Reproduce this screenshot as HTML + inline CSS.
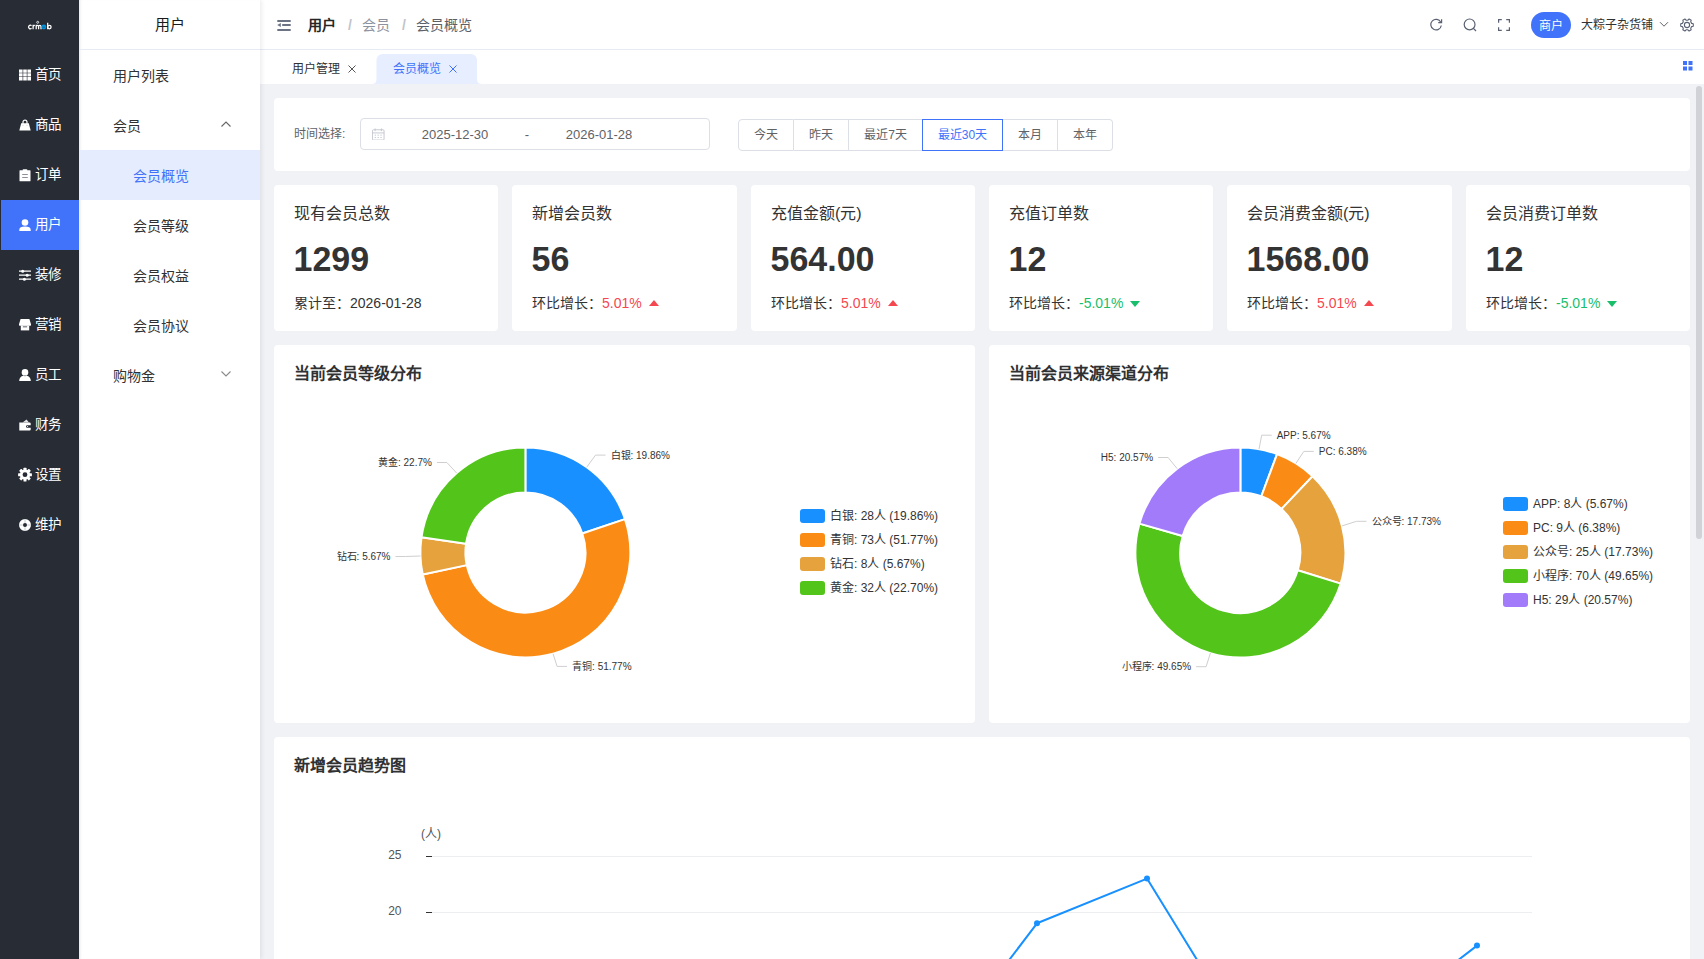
<!DOCTYPE html>
<html lang="zh-CN"><head><meta charset="utf-8"><title>会员概览</title>
<style>
*{box-sizing:border-box;margin:0;padding:0}
html,body{width:1704px;height:959px;overflow:hidden}
body{position:relative;white-space:nowrap;background:#f0f2f5;font-family:"Liberation Sans",sans-serif;color:#303133;font-size:14px}
.abs{position:absolute}
#side{position:absolute;left:0;top:0;width:79px;height:959px;background:#282c34}
.si{position:absolute;left:0;width:79px;height:50px;color:#fff;font-size:13.5px;line-height:50px;white-space:nowrap}
.si.act{background:#4073fa;left:1px;width:78px}
.si .ic{position:absolute;left:19px;top:19px;overflow:visible}
.si.act .ic{left:18px}
.si span{position:absolute;left:34.5px;top:0}
.si.act span{left:33.5px}
#sub{position:absolute;left:79px;top:0;width:181px;height:959px;background:#fff;box-shadow:2px 0 4px rgba(0,21,41,.07),inset 3px 0 3px -2px rgba(0,0,0,.10);z-index:2}
#sub .hd{height:50px;border-bottom:1px solid #e7ebf3;text-align:center;line-height:49px;font-size:15px;color:#1a1a1a}
.mi{position:absolute;left:0;width:181px;height:50px;line-height:53px;font-size:14px;color:#303133;padding-left:34px}
.mi.l2{padding-left:54px}
.mi.on{background:#e4ecfe;color:#4073fa}
.chev{position:absolute;right:28px;top:20px}
#hdr{position:absolute;left:260px;top:0;width:1444px;height:50px;background:#fff;border-bottom:1px solid #e7ebf3}
#tabs{position:absolute;left:260px;top:50px;width:1444px;height:34px;background:#fff}
.bc{position:absolute;top:0;line-height:50px;font-size:14px;white-space:nowrap}
.card{position:absolute;background:#fff;border-radius:4px}
.st{top:185px;height:146px}
.ct{position:absolute;left:20px;top:21px;font-size:16px;line-height:16px;color:#333;white-space:nowrap}
.cn{position:absolute;left:19.5px;top:55.5px;font-size:34px;line-height:36px;font-weight:bold;color:#333;transform:scaleY(1.055);transform-origin:0 29.8px}
.cb{position:absolute;left:20px;top:110px;font-size:14px;line-height:16px;color:#333;white-space:nowrap}
.red{color:#f5474f}.grn{color:#19be6b}
.tu{display:inline-block;width:0;height:0;border-left:5px solid transparent;border-right:5px solid transparent;border-bottom:6px solid #f5474f;margin-left:7px;vertical-align:2px}
.td{display:inline-block;width:0;height:0;border-left:5px solid transparent;border-right:5px solid transparent;border-top:6px solid #19be6b;margin-left:7px;vertical-align:1px}
.h3{position:absolute;left:20px;top:19px;font-size:16px;line-height:20px;font-weight:bold;color:#303133}
.pl{font-size:10px;fill:#333;font-family:"Liberation Sans",sans-serif}
.lg{font-size:12px;fill:#333;font-family:"Liberation Sans",sans-serif}
.ax{font-size:12px;fill:#555;font-family:"Liberation Sans",sans-serif}
.rb{position:absolute;top:0;height:32px;border:1px solid #dcdfe6;border-left:0;background:#fff;font-size:12px;line-height:30px;text-align:center;color:#606266}
</style></head><body>
<div id="side">
<svg class="abs" style="left:27px;top:18px" width="28" height="14" viewBox="0 0 28 14"><g fill="none" stroke="#fff" stroke-width="1.250"><path d="M4.5 7.7A1.750 1.750 0 1 0 4.5 10.3"/><path d="M6.1 6.8V11.3M6.1 8.7A1.7 1.7 0 0 1 7.9 7.3"/><path d="M9.2 6.8V11.3M9.2 8.5A1.2 1.2 0 0 1 11.6 8.5V11.3M11.6 8.5A1.2 1.2 0 0 1 14 8.5V11.3"/><path d="M20.7 4.8V11.3"/><circle cx="22.4" cy="9.1" r="1.7"/><circle cx="10.7" cy="4.3" r="1" stroke-width="0.8"/></g><circle cx="16.9" cy="9" r="2.4" fill="#0092dc"/><path d="M15.3 9.2h2.4" stroke="#282c34" stroke-width="0.5"/></svg>
<div class="si" style="top:50px"><svg class="ic" width="12" height="12" viewBox="0 0 12 12"><path d="M0 0.5h3.6v3.2H0zM4.2 0.5h3.6v3.2H4.2zM8.4 0.5H12v3.2H8.4zM0 4.3h3.6v3.2H0zM4.2 4.3h3.6v3.2H4.2zM8.4 4.3H12v3.2H8.4zM0 8.1h3.6v3.4H0zM4.2 8.1h3.6v3.4H4.2zM8.4 8.1H12v3.4H8.4z" fill="#fff"/></svg><span>首页</span></div>
<div class="si" style="top:100px"><svg class="ic" width="12" height="12" viewBox="0 0 12 12"><path d="M2.2 4.2h7.6l1.9 7.3H0.3z" fill="#fff"/><path d="M4 5V3.2a2 2 0 0 1 4 0V5" fill="none" stroke="#fff" stroke-width="1.2"/><circle cx="4" cy="6.2" r="0.55" fill="#c8cbd0"/><circle cx="8" cy="6.2" r="0.55" fill="#c8cbd0"/></svg><span>商品</span></div>
<div class="si" style="top:150px"><svg class="ic" width="12" height="12" viewBox="0 0 12 12"><path d="M1 1.3h10a0.5 0.5 0 0 1 .5.5v9.9a0.5 0.5 0 0 1-.5.5H1a0.5 0.5 0 0 1-.5-.5V1.8a0.5 0.5 0 0 1 .5-.5z" fill="#fff"/><rect x="3.6" y="0.2" width="4.8" height="1.8" rx="0.9" fill="#fff"/><rect x="3.2" y="5" width="5.6" height="1" fill="#8d9199"/><rect x="3.2" y="8" width="5.6" height="1" fill="#8d9199"/></svg><span>订单</span></div>
<div class="si act" style="top:200px"><svg class="ic" width="12" height="12" viewBox="0 0 12 12"><circle cx="6" cy="3.5" r="3.3" fill="#fff"/><path d="M0.3 12v-1.2c0-2 2-3.2 5.7-3.2s5.7 1.2 5.7 3.2V12z" fill="#fff"/></svg><span>用户</span></div>
<div class="si" style="top:250px"><svg class="ic" width="12" height="12" viewBox="0 0 12 12"><path d="M0 2.2h12M0 6.2h12M0 10.2h12" stroke="#fff" stroke-width="1.3"/><circle cx="3.7" cy="2.2" r="1.5" fill="#fff"/><circle cx="8.2" cy="6.2" r="1.5" fill="#fff"/><circle cx="5.4" cy="10.2" r="1.5" fill="#fff"/></svg><span>装修</span></div>
<div class="si" style="top:300px"><svg class="ic" width="12" height="12" viewBox="0 0 12 12"><path d="M1.6 0h8.8l1.6 5.2a1.2 1.2 0 0 1-1.1 1.6H1.1a1.2 1.2 0 0 1-1.1-1.6z" fill="#fff"/><path d="M1.8 6.5h8.4v4.9H1.8z" fill="#fff"/><rect x="3.8" y="7.4" width="4.4" height="0.9" rx="0.4" fill="#282c34"/></svg><span>营销</span></div>
<div class="si" style="top:350px"><svg class="ic" width="12" height="12" viewBox="0 0 12 12"><circle cx="6" cy="3.4" r="3.3" fill="#fff"/><path d="M0.2 12c0-3.2 2.3-5.4 5.8-5.4s5.8 2.2 5.8 5.4z" fill="#fff"/><path d="M5.2 6.6h1.6l-.8 1z" fill="#282c34"/></svg><span>员工</span></div>
<div class="si" style="top:400px"><svg class="ic" width="12" height="12" viewBox="0 0 12 12"><path d="M0.3 3.5h10.4a1 1 0 0 1 1 1v1.7H8.3a1.2 1.2 0 0 0 0 2.6h3.4v1.7a1 1 0 0 1-1 1H0.3z" fill="#fff"/><path d="M3.6 3.5L7.5 0.5l2.5 3z" fill="#e4e5e7"/><circle cx="8.6" cy="7.5" r="0.6" fill="#fff"/></svg><span>财务</span></div>
<div class="si" style="top:450px"><svg class="ic" width="12" height="12" viewBox="0 0 12 12"><g transform="translate(6 5.7)"><circle r="5.1" fill="#fff"/><g fill="#fff"><rect x="-1.5" y="-6.9" width="3" height="13.8" rx="0.5"/><rect x="-1.5" y="-6.9" width="3" height="13.8" rx="0.5" transform="rotate(45)"/><rect x="-1.5" y="-6.9" width="3" height="13.8" rx="0.5" transform="rotate(90)"/><rect x="-1.5" y="-6.9" width="3" height="13.8" rx="0.5" transform="rotate(135)"/></g><circle r="2.4" fill="#282c34"/></g></svg><span>设置</span></div>
<div class="si" style="top:500px"><svg class="ic" width="12" height="12" viewBox="0 0 12 12"><circle cx="6" cy="6" r="4" fill="none" stroke="#fff" stroke-width="4"/><path d="M6 0v3.8M6 8.2V12M0 6h3.8M8.2 6H12" stroke="#b9bbc0" stroke-width="0.8"/></svg><span>维护</span></div>

</div>
<div id="sub">
<div class="hd">用户</div>
<div class="mi" style="top:50px">用户列表</div>
<div class="mi" style="top:100px">会员<svg class="chev" width="12" height="8" viewBox="0 0 12 8"><path d="M1.5 6.5L6 2l4.5 4.5" fill="none" stroke="#666" stroke-width="1.1"/></svg></div>
<div class="mi l2 on" style="top:150px">会员概览</div>
<div class="mi l2" style="top:200px">会员等级</div>
<div class="mi l2" style="top:250px">会员权益</div>
<div class="mi l2" style="top:300px">会员协议</div>
<div class="mi" style="top:350px">购物金<svg class="chev" width="12" height="8" viewBox="0 0 12 8"><path d="M1.5 1.5L6 6l4.5-4.5" fill="none" stroke="#8a8a8a" stroke-width="1.1"/></svg></div>
</div>
<div id="hdr">
<svg class="abs" style="left:17px;top:19px" width="14" height="13" viewBox="0 0 14 13"><path d="M0.3 1h13.4v2H0.3zM5.2 5h8.5v2H5.2zM0.3 10h13.4v2H0.3z" fill="#6b7385"/><path d="M0.2 6L3.8 4v4z" fill="#6b7385"/></svg>
<div class="bc" style="left:48px;font-weight:bold;color:#262626">用户</div>
<div class="bc" style="left:88px;color:#c0c4cc;font-weight:bold">/</div>
<div class="bc" style="left:102px;color:#8d929e">会员</div>
<div class="bc" style="left:142px;color:#c0c4cc;font-weight:bold">/</div>
<div class="bc" style="left:156px;color:#5c6066">会员概览</div>
<svg class="abs" style="left:1169px;top:18px" width="14" height="14" viewBox="0 0 14 14"><path d="M11.8 4.2A5.3 5.3 0 1 0 12.3 7.5" fill="none" stroke="#5a6172" stroke-width="1.2"/><path d="M12.6 1.3v3.4H9.2" fill="none" stroke="#5a6172" stroke-width="1.2"/></svg>
<svg class="abs" style="left:1203px;top:18px" width="14" height="14" viewBox="0 0 14 14"><circle cx="6.6" cy="6.4" r="5.4" fill="none" stroke="#5a6172" stroke-width="1.2"/><path d="M10.4 10.3l2.6 2.7" stroke="#5a6172" stroke-width="1.2"/></svg>
<svg class="abs" style="left:1238px;top:19px" width="12" height="12" viewBox="0 0 12 12"><path d="M0.6 3.8V0.6h3.2M8.2 0.6h3.2v3.2M11.4 8.2v3.2H8.2M3.8 11.4H0.6V8.2" fill="none" stroke="#5a6172" stroke-width="1.2"/></svg>
<div class="abs" style="left:1271px;top:12px;width:40px;height:26px;border-radius:13px;background:#4073fa;color:#fff;font-size:12px;line-height:28px;text-align:center">商户</div>
<div class="abs" style="left:1321px;top:0;line-height:50px;font-size:12px;color:#303133;white-space:nowrap">大粽子杂货铺</div>
<svg class="abs" style="left:1399px;top:21px" width="10" height="7" viewBox="0 0 10 7"><path d="M1 1.2l4 4 4-4" fill="none" stroke="#606266" stroke-width="1"/></svg>
<svg class="abs" style="left:1420px;top:18px" width="14" height="14" viewBox="0 0 14 14"><path d="M11.63 5.40L13.28 5.78L13.28 8.22L11.63 8.60L10.70 10.21L11.20 11.83L9.08 13.05L7.93 11.81L6.07 11.81L4.92 13.05L2.80 11.83L3.30 10.21L2.37 8.60L0.72 8.22L0.72 5.78L2.37 5.40L3.30 3.79L2.80 2.17L4.92 0.95L6.07 2.19L7.93 2.19L9.08 0.95L11.20 2.17L10.70 3.79Z" fill="none" stroke="#5a6172" stroke-width="1.1" stroke-linejoin="round"/><circle cx="7" cy="7" r="2.6" fill="none" stroke="#5a6172" stroke-width="1.1"/></svg>
</div>
<div id="tabs">
<svg class="abs" style="left:112px;top:4px" width="110" height="30" viewBox="0 0 110 30"><path d="M0 30C4 30 4.5 27 4.5 24V6a6 6 0 0 1 6-6H99a6 6 0 0 1 6 6v18c0 3 .5 6 5 6z" fill="#e6eeff"/></svg>
<div class="abs" style="left:32px;top:0;line-height:39px;font-size:12px;color:#303133">用户管理</div>
<svg class="abs" style="left:88px;top:14.7px" width="8" height="8" viewBox="0 0 8 8"><path d="M0.5 0.5l7 7M7.5 0.5l-7 7" stroke="#555" stroke-width="1"/></svg>
<div class="abs" style="left:133px;top:0;line-height:39px;font-size:12px;color:#4073fa">会员概览</div>
<svg class="abs" style="left:189px;top:14.7px" width="8" height="8" viewBox="0 0 8 8"><path d="M0.5 0.5l7 7M7.5 0.5l-7 7" stroke="#4073fa" stroke-width="1"/></svg>
<svg class="abs" style="left:1423px;top:11px" width="10" height="10" viewBox="0 0 10 10"><path d="M0 0h4v4H0zM5.5 0h4v4h-4zM0 5.5h4v4H0zM5.5 5.5h4v4h-4z" fill="#4073fa"/></svg>
</div>

<div class="card" style="left:274px;top:98px;width:1416px;height:73px">
<div class="abs" style="left:20px;top:20px;line-height:32px;font-size:12px;color:#606266">时间选择:</div>
<div class="abs" style="left:86px;top:20px;width:350px;height:32px;border:1px solid #dcdfe6;border-radius:4px">
<svg class="abs" style="left:11px;top:8.5px" width="12.5" height="12.5" viewBox="0 0 14 14"><rect x="0.5" y="2" width="13" height="11.5" rx="1" fill="none" stroke="#c0c4cc"/><path d="M0.5 5.5h13M3.5 0.5v3M10.5 0.5v3" stroke="#c0c4cc"/><path d="M3 8h1.5M6.2 8h1.5M9.4 8h1.5M3 10.6h1.5M6.2 10.6h1.5M9.4 10.6h1.5" stroke="#c0c4cc"/></svg>
<div class="abs" style="left:34px;top:0;width:120px;text-align:center;line-height:32px;font-size:13px;color:#606266">2025-12-30</div>
<div class="abs" style="left:160px;top:0;width:12px;text-align:center;line-height:32px;font-size:13px;color:#606266">-</div>
<div class="abs" style="left:178px;top:0;width:120px;text-align:center;line-height:32px;font-size:13px;color:#606266">2026-01-28</div>
</div>
<div class="abs" style="left:464px;top:21px;height:32px;width:376px">
<div class="rb" style="left:0;width:56px;border-left:1px solid #dcdfe6;border-radius:4px 0 0 4px">今天</div>
<div class="rb" style="left:56px;width:55px">昨天</div>
<div class="rb" style="left:111px;width:74px">最近7天</div>
<div class="rb" style="left:184px;width:81px;border:1px solid #4073fa;color:#4073fa">最近30天</div>
<div class="rb" style="left:265px;width:55px">本月</div>
<div class="rb" style="left:320px;width:55px;border-radius:0 4px 4px 0">本年</div>
</div>
</div>

<div class="card st" style="left:274px;width:224px"><div class="ct">现有会员总数</div><div class="cn">1299</div><div class="cb">累计至：2026-01-28</div></div>
<div class="card st" style="left:512px;width:225px"><div class="ct">新增会员数</div><div class="cn">56</div><div class="cb">环比增长：<span class="red">5.01%</span><i class="tu"></i></div></div>
<div class="card st" style="left:751px;width:224px"><div class="ct">充值金额(元)</div><div class="cn">564.00</div><div class="cb">环比增长：<span class="red">5.01%</span><i class="tu"></i></div></div>
<div class="card st" style="left:989px;width:224px"><div class="ct">充值订单数</div><div class="cn">12</div><div class="cb">环比增长：<span class="grn">-5.01%</span><i class="td"></i></div></div>
<div class="card st" style="left:1227px;width:225px"><div class="ct">会员消费金额(元)</div><div class="cn">1568.00</div><div class="cb">环比增长：<span class="red">5.01%</span><i class="tu"></i></div></div>
<div class="card st" style="left:1466px;width:224px"><div class="ct">会员消费订单数</div><div class="cn">12</div><div class="cb">环比增长：<span class="grn">-5.01%</span><i class="td"></i></div></div>


<div class="card" style="left:274px;top:345px;width:701px;height:378px"><div class="h3">当前会员等级分布</div></div>
<div class="card" style="left:989px;top:345px;width:701px;height:378px"><div class="h3">当前会员来源渠道分布</div></div>
<div class="card" style="left:274px;top:737px;width:1416px;height:300px"><div class="h3">新增会员趋势图</div></div>

<svg class="abs" style="left:0;top:0" width="1704" height="959" viewBox="0 0 1704 959">
<path d="M525.40 447.50A105 105 0 0 1 624.97 519.16L582.30 533.45A60 60 0 0 0 525.40 492.50Z" fill="#1890ff" stroke="#fff" stroke-width="2" stroke-linejoin="round"/>
<path d="M624.97 519.16A105 105 0 1 1 422.74 574.56L466.74 565.11A60 60 0 1 0 582.30 533.45Z" fill="#fa8c16" stroke="#fff" stroke-width="2" stroke-linejoin="round"/>
<path d="M422.74 574.56A105 105 0 0 1 421.50 537.35L466.03 543.84A60 60 0 0 0 466.74 565.11Z" fill="#e6a23c" stroke="#fff" stroke-width="2" stroke-linejoin="round"/>
<path d="M421.50 537.35A105 105 0 0 1 525.40 447.50L525.40 492.50A60 60 0 0 0 466.03 543.84Z" fill="#52c41a" stroke="#fff" stroke-width="2" stroke-linejoin="round"/>
<polyline points="586.7,467.3 595.5,455.1 605.5,455.1" fill="none" stroke="#cfcfcf" stroke-width="1"/>
<text x="610.5" y="458.7" text-anchor="start" class="pl">白银: 19.86%</text>
<polyline points="553.1,653.8 557.1,666.4 567.1,666.4" fill="none" stroke="#cfcfcf" stroke-width="1"/>
<text x="572.1" y="670.0" text-anchor="start" class="pl">青铜: 51.77%</text>
<polyline points="420.5,556.0 405.5,556.5 395.5,556.5" fill="none" stroke="#cfcfcf" stroke-width="1"/>
<text x="390.5" y="560.1" text-anchor="end" class="pl">钻石: 5.67%</text>
<polyline points="456.7,473.1 446.9,462.5 436.9,462.5" fill="none" stroke="#cfcfcf" stroke-width="1"/>
<text x="431.9" y="466.1" text-anchor="end" class="pl">黄金: 22.7%</text><rect x="800" y="509" width="25" height="14" rx="3" fill="#1890ff"/>
<text x="830" y="520.3" class="lg">白银: 28人 (19.86%)</text>
<rect x="800" y="533" width="25" height="14" rx="3" fill="#fa8c16"/>
<text x="830" y="544.3" class="lg">青铜: 73人 (51.77%)</text>
<rect x="800" y="557" width="25" height="14" rx="3" fill="#e6a23c"/>
<text x="830" y="568.3" class="lg">钻石: 8人 (5.67%)</text>
<rect x="800" y="581" width="25" height="14" rx="3" fill="#52c41a"/>
<text x="830" y="592.3" class="lg">黄金: 32人 (22.70%)</text>
<path d="M1240.40 447.50A105 105 0 0 1 1277.04 454.10L1261.34 496.27A60 60 0 0 0 1240.40 492.50Z" fill="#1890ff" stroke="#fff" stroke-width="2" stroke-linejoin="round"/>
<path d="M1277.04 454.10A105 105 0 0 1 1312.55 476.22L1281.63 508.91A60 60 0 0 0 1261.34 496.27Z" fill="#fa8c16" stroke="#fff" stroke-width="2" stroke-linejoin="round"/>
<path d="M1312.55 476.22A105 105 0 0 1 1340.69 583.61L1297.71 570.28A60 60 0 0 0 1281.63 508.91Z" fill="#e6a23c" stroke="#fff" stroke-width="2" stroke-linejoin="round"/>
<path d="M1340.69 583.61A105 105 0 0 1 1139.45 523.63L1182.71 536.00A60 60 0 0 0 1297.71 570.28Z" fill="#52c41a" stroke="#fff" stroke-width="2" stroke-linejoin="round"/>
<path d="M1139.45 523.63A105 105 0 0 1 1240.40 447.50L1240.40 492.50A60 60 0 0 0 1182.71 536.00Z" fill="#a27bfb" stroke="#fff" stroke-width="2" stroke-linejoin="round"/>
<polyline points="1259.0,449.2 1261.7,435.2 1271.7,435.2" fill="none" stroke="#cfcfcf" stroke-width="1"/>
<text x="1276.7" y="438.8" text-anchor="start" class="pl">APP: 5.67%</text>
<polyline points="1295.9,463.4 1303.8,451.4 1313.8,451.4" fill="none" stroke="#cfcfcf" stroke-width="1"/>
<text x="1318.8" y="455.0" text-anchor="start" class="pl">PC: 6.38%</text>
<polyline points="1342.0,525.9 1356.5,521.3 1366.5,521.3" fill="none" stroke="#cfcfcf" stroke-width="1"/>
<text x="1371.5" y="524.9" text-anchor="start" class="pl">公众号: 17.73%</text>
<polyline points="1210.4,653.1 1206.1,666.7 1196.1,666.7" fill="none" stroke="#cfcfcf" stroke-width="1"/>
<text x="1191.1" y="670.3" text-anchor="end" class="pl">小程序: 49.65%</text>
<polyline points="1177.2,468.7 1168.1,457.5 1158.1,457.5" fill="none" stroke="#cfcfcf" stroke-width="1"/>
<text x="1153.1" y="461.1" text-anchor="end" class="pl">H5: 20.57%</text><rect x="1503" y="497" width="25" height="14" rx="3" fill="#1890ff"/>
<text x="1533" y="508.3" class="lg">APP: 8人 (5.67%)</text>
<rect x="1503" y="521" width="25" height="14" rx="3" fill="#fa8c16"/>
<text x="1533" y="532.3" class="lg">PC: 9人 (6.38%)</text>
<rect x="1503" y="545" width="25" height="14" rx="3" fill="#e6a23c"/>
<text x="1533" y="556.3" class="lg">公众号: 25人 (17.73%)</text>
<rect x="1503" y="569" width="25" height="14" rx="3" fill="#52c41a"/>
<text x="1533" y="580.3" class="lg">小程序: 70人 (49.65%)</text>
<rect x="1503" y="593" width="25" height="14" rx="3" fill="#a27bfb"/>
<text x="1533" y="604.3" class="lg">H5: 29人 (20.57%)</text>

<line x1="432" y1="856.5" x2="1532" y2="856.5" stroke="#eceef0"/>
<line x1="432" y1="912.5" x2="1532" y2="912.5" stroke="#eceef0"/>
<line x1="426" y1="856.5" x2="432" y2="856.5" stroke="#333"/>
<line x1="426" y1="912.5" x2="432" y2="912.5" stroke="#333"/>
<text x="421" y="838" class="ax">(人)</text>
<text x="401.5" y="858.5" text-anchor="end" class="ax">25</text>
<text x="401.5" y="914.5" text-anchor="end" class="ax">20</text>
<polyline points="487,1101.8 597,1079.5 707,1113.0 817,1046.0 927,1068.3 1037,923.3 1147,878.6 1257,1057.2 1367,1030.4 1477,945.6" fill="none" stroke="#1890ff" stroke-width="2" stroke-linejoin="round"/>
<circle cx="487" cy="1101.8" r="3" fill="#1890ff"/><circle cx="597" cy="1079.5" r="3" fill="#1890ff"/><circle cx="707" cy="1113.0" r="3" fill="#1890ff"/><circle cx="817" cy="1046.0" r="3" fill="#1890ff"/><circle cx="927" cy="1068.3" r="3" fill="#1890ff"/><circle cx="1037" cy="923.3" r="3" fill="#1890ff"/><circle cx="1147" cy="878.6" r="3" fill="#1890ff"/><circle cx="1257" cy="1057.2" r="3" fill="#1890ff"/><circle cx="1367" cy="1030.4" r="3" fill="#1890ff"/><circle cx="1477" cy="945.6" r="3" fill="#1890ff"/>

</svg>
<div class="abs" style="left:1696px;top:86px;width:6px;height:453px;border-radius:3px;background:#d0d2d8"></div>
</body></html>
